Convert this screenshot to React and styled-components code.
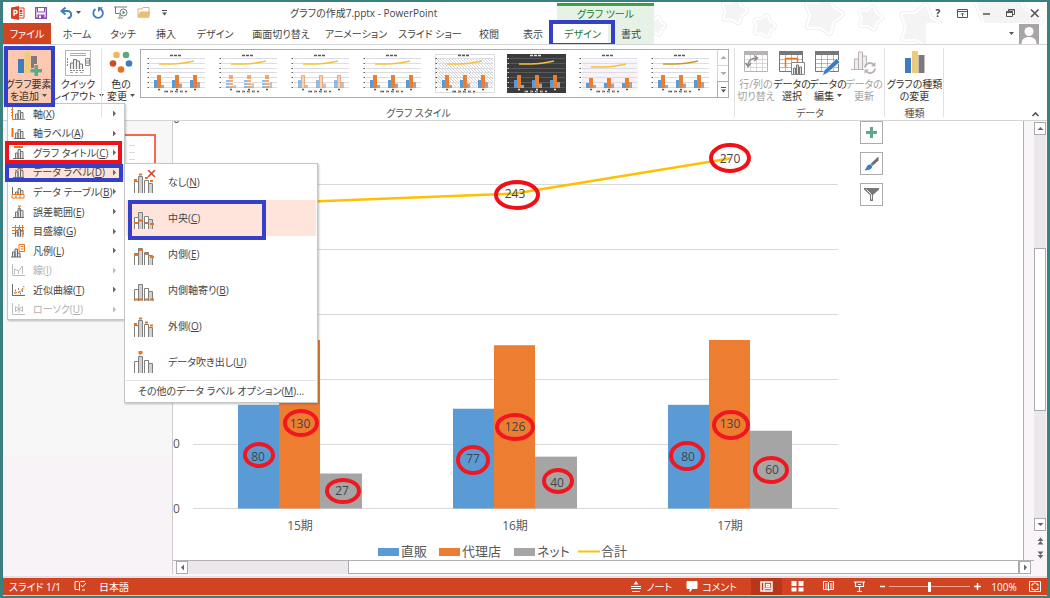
import { Fragment } from 'react';
import styled, { createGlobalStyle, css } from 'styled-components';

const GlobalStyle = createGlobalStyle`
    *{
        box-sizing: border-box;
    }
    body{
        margin: 0;
        background: #3c7f80;
        color: #444;
        font-family: 'Open Sans', 'Noto Sans CJK JP', sans-serif;
        font-feature-settings: 'palt';
        font-size: 10px;
        line-height: 12px;
    }
    button{
        background: none;
        border: 0;
        color: inherit;
        font: inherit;
        font-feature-settings: inherit;
        margin: 0;
        padding: 0;
        white-space: nowrap;
    }
    svg{
        display: block;
        flex: none;
    }
`

/* ---------- window frame ---------- */

const Frame = styled.div`
    border: 3px solid #3c7f80;
    border-bottom-width: 2px;
    border-top-width: 2px;
    display: flex;
    flex-direction: column;
    min-height: 100vh;
`

const Header = styled.header`
    background: #fff;
    display: flex;
    height: 42px;
    position: relative;
`

const HeaderMain = styled.div`
    display: flex;
    flex-direction: column;
    width: 554px;
`

const TitleRow = styled.div`
    align-items: center;
    display: flex;
    height: 21px;
`

const QuickAccess = styled.div`
    align-items: center;
    display: flex;
    gap: 7px;
    padding-left: 8px;
    width: 287px;
`

const IconButton = styled.button`
    align-items: center;
    display: flex;
    gap: 3px;
    justify-content: center;
    min-width: ${({ $width }) => $width || 14}px;
`

const Title = styled.h1`
    font-size: 10px;
    font-weight: 400;
    margin: 0;
    white-space: nowrap;
`

const TabRow = styled.nav`
    display: flex;
    height: 21px;
`

const Tab = styled.button`
    color: ${({ $active }) => ($active ? '#1b7a2b' : '#444')};
    background: ${({ $active }) => ($active ? '#fff' : 'none')};
    position: relative;
    width: ${({ $width }) => $width}px;
    ${({ $file }) => $file && css`
        background: #d24322;
        color: #fff;
    `}
`

const ContextTabs = styled.div`
    background: #e6f2e6;
    border-top: 3px solid #3f9f46;
    display: flex;
    flex-direction: column;
    margin-top: 1px;
    position: relative;
    width: 97px;
    z-index: 1;
`

const ContextTitle = styled.div`
    color: #1b7a2b;
    height: 17px;
    line-height: 17px;
    text-align: center;
`

const HeaderSide = styled.div`
    display: flex;
    flex: 1;
    flex-direction: column;
    overflow: hidden;
    position: relative;
`

const StarBackdrop = styled.svg`
    height: 42px;
    position: absolute;
    right: 0;
    top: 0;
    width: 393px;
`

const WindowButtons = styled.div`
    align-items: center;
    display: flex;
    gap: 10px;
    height: 21px;
    justify-content: flex-end;
    padding-right: 6px;
    position: relative;
`

const AccountRow = styled.div`
    align-items: center;
    align-self: flex-end;
    background: #fff;
    display: flex;
    gap: 5px;
    height: 21px;
    justify-content: flex-end;
    margin-right: 8px;
    position: relative;
    width: 113px;
`

/* hand-drawn frame laid over the control that is being explained */
const Callout = styled.span`
    border: 4px solid ${({ $color }) => $color || '#3440c8'};
    inset: ${({ $inset }) => $inset};
    pointer-events: none;
    position: absolute;
    z-index: 2;
`

/* ---------- ribbon ---------- */

const Ribbon = styled.section`
    background: #fff;
    border-bottom: 1px solid #d5d5d5;
    border-top: 1px solid #d5d5d5;
    display: flex;
    height: 77px;
    padding-top: 2px;
    position: relative;
    z-index: 3;
`

const Group = styled.div`
    display: flex;
    flex-direction: column;
    padding: 0 ${({ $pad }) => $pad || 0}px;
    position: relative;
    &::after{
        background: #e1e1e1;
        bottom: 3px;
        content: '';
        position: absolute;
        right: 0;
        top: 1px;
        width: 1px;
    }
`

const GroupBody = styled.div`
    display: flex;
    height: 60px;
`

const GroupLabel = styled.div`
    color: #555;
    text-align: center;
`

const Anchor = styled.div`
    display: flex;
    position: relative;
`

const RibbonButton = styled.button`
    align-items: center;
    background: ${({ $active }) => ($active ? '#fcc9b0' : 'none')};
    color: ${({ disabled }) => (disabled ? '#a0a0a0' : '#333')};
    display: flex;
    flex-direction: column;
    height: 58px;
    padding-top: 3px;
    width: ${({ $width }) => $width}px;
    svg{
        margin-bottom: 2px;
    }
`

const ButtonLine = styled.span`
    align-items: center;
    display: flex;
    gap: 3px;
`

const Gallery = styled.div`
    border: 1px solid #ababab;
    display: flex;
    height: 49px;
    margin-right: 6px;
    margin-top: 2px;
`

const GalleryItem = styled.button`
    display: flex;
    justify-content: center;
    padding-top: 4px;
    width: 72px;
`

const GalleryScroll = styled.div`
    border-left: 1px solid #d5d5d5;
    display: flex;
    flex-direction: column;
    width: 11px;
    button{
        align-items: center;
        border-bottom: 1px solid #d5d5d5;
        display: flex;
        flex: 1;
        justify-content: center;
    }
    button:last-child{
        border: 1px solid #ababab;
        margin: -1px;
    }
`

const CollapseButton = styled.button`
    align-self: flex-end;
    margin: 0 7px 3px auto;
`

/* ---------- menus ---------- */

const Menu = styled.div`
    background: #fff;
    border: 1px solid #c6c6c6;
    box-shadow: 1px 1px 2px rgba(0, 0, 0, 0.25);
    display: flex;
    flex-direction: column;
    height: 217px;
    left: 4px;
    position: absolute;
    top: 56px;
    width: 118px;
`

const MenuItem = styled.button`
    align-items: center;
    background: ${({ $active }) => ($active ? '#fde4d9' : 'none')};
    color: ${({ disabled }) => (disabled ? '#b0b0b0' : '#444')};
    display: flex;
    flex: 1;
    gap: 8px;
    padding: 0 6px 0 3px;
    width: 100%;
`

const MenuLabel = styled.span`
    flex: 1;
    min-width: 0;
    text-align: left;
`

const MenuRow = styled.div`
    display: flex;
    flex: 1;
    position: relative;
`

const SubMenu = styled.div`
    background: #fff;
    border: 1px solid #c6c6c6;
    box-shadow: 1px 1px 2px rgba(0, 0, 0, 0.25);
    left: 116px;
    padding: 0 1px;
    position: absolute;
    top: 0;
    width: 194px;
    z-index: 3;
`

const SubMenuRow = styled.div`
    position: relative;
`

const SubMenuItem = styled.button`
    align-items: center;
    background: ${({ $active }) => ($active ? '#fee4db' : 'none')};
    color: #444;
    display: flex;
    gap: 11px;
    height: 36px;
    padding-left: 7px;
    width: 100%;
`

const SubMenuFooter = styled.button`
    border-top: 1px solid #e1e1e1;
    color: #444;
    height: 22px;
    text-align: center;
    width: 100%;
`

/* ---------- workspace ---------- */

const Workspace = styled.main`
    background: #f9f5f9;
    display: flex;
    flex: 1;
    min-height: 0;
`

const SlidePane = styled.aside`
    background: linear-gradient(#f7f7f7 74%, #f8f3f7 74%);
    border-right: 1px solid #cfcbcf;
    padding: 13px 16px;
    width: 170px;
`

const SlideThumb = styled.div`
    background: #fff;
    border: 2px solid #f26c4f;
    display: flex;
    flex-direction: column;
    gap: 6px;
    height: 96px;
    padding: 9px 0 0 108px;
    i{
        background: #d9d9d9;
        height: 1px;
        width: 6px;
    }
`

const Editor = styled.div`
    display: flex;
    flex: 1;
    flex-direction: column;
    min-width: 0;
`

const CanvasRow = styled.div`
    display: flex;
    flex: 1;
    min-height: 0;
`

const Canvas = styled.div`
    background: #fff;
    border-right: 1px solid #b5b0b5;
    flex: 1;
    min-width: 0;
    position: relative;
`

const Plot = styled.svg`
    height: auto;
    width: 100%;
    text{
        fill: #444;
        font-size: 12px;
    }
    .axis{
        fill: #595959;
    }
    .legend{
        fill: #595959;
        font-size: 13px;
    }
`

const CanvasGutter = styled.div`
    width: 10px;
`

const ChartTools = styled.div`
    display: flex;
    flex-direction: column;
    gap: 8px;
    position: absolute;
    right: 140px;
    top: 0;
`

const ToolButton = styled.button`
    align-items: center;
    background: #fff;
    border: 1px solid #ababab;
    display: flex;
    height: 23px;
    justify-content: center;
    width: 23px;
`

const ScrollButton = styled.button`
    align-items: center;
    background: #fff;
    border: 1px solid #ababab;
    display: flex;
    flex: none;
    height: 13px;
    justify-content: center;
    width: 12px;
`

const VScroll = styled.div`
    align-items: center;
    display: flex;
    flex-direction: column;
    padding: 1px 1px 15px 0;
    width: 13px;
`

const HScroll = styled.div`
    background: #f9f5f9;
    border-top: 1px solid #b5b0b5;
    display: flex;
    height: 14px;
    padding: 0 3px;
`

const Track = styled.div`
    background: #ebe7eb;
    flex: ${({ $grow }) => $grow};
`

const VTrack = styled(Track)`
    width: 12px;
`

const VThumb = styled.div`
    background: #fff;
    border: 1px solid #ababab;
    flex: 162;
    width: 12px;
`

const HThumb = styled.div`
    background: #fff;
    border: 1px solid #ababab;
    border-top: 0;
    flex: 671;
`

const SlideStep = styled.button`
    margin-top: 6px;
`

/* ---------- status bar ---------- */

const StatusArea = styled.div`
    background: #f9f5f9;
    padding-top: 4px;
`

const StatusBar = styled.footer`
    align-items: stretch;
    background: #d24322;
    border-bottom: 1px solid #e8d0cc;
    box-shadow: 0 -2px 0 #e6e0e4;
    color: #fff;
    display: flex;
    height: 18px;
`

const StatusGroup = styled.div`
    align-items: center;
    display: flex;
    gap: ${({ $gap }) => $gap || 0}px;
    padding-left: ${({ $pad }) => $pad || 0}px;
`

const StatusSpacer = styled.div`
    flex: 1;
`

const StatusButton = styled.button`
    align-items: center;
    align-self: stretch;
    background: ${({ $active }) => ($active ? '#b93618' : 'none')};
    display: flex;
    gap: 3px;
    justify-content: center;
    min-width: ${({ $width }) => $width || 14}px;
`

const ZoomSlider = styled.input`
    appearance: none;
    background: transparent;
    height: 12px;
    margin: 0;
    width: 81px;
    &::-webkit-slider-runnable-track{
        background: linear-gradient(#f0a593, #f0a593) center / 100% 1px no-repeat;
        height: 10px;
    }
    &::-webkit-slider-thumb{
        appearance: none;
        background: #fff;
        height: 10px;
        width: 3px;
    }
`

/* ---------- icons ---------- */

const O = '#e8741c';
const G = '#6b6b6b';
const BLUE = '#3f7cbf';

const Caret = ({ color = '#555' }) => (
    <svg width="5" height="3" viewBox="0 0 5 3"><path d="M0 0h5L2.5 3z" fill={color} /></svg>
);

const Arrow = ({ dir, color = '#666' }) => {
    const d = {
        up: 'M0.5 5L3.5 2L6.5 5z',
        down: 'M0.5 2L3.5 5L6.5 2z',
        left: 'M5 0.5L2 3.5L5 6.5z',
        right: 'M2 0.5L5 3.5L2 6.5z',
    }[dir];
    return <svg width="7" height="7" viewBox="0 0 7 7"><path d={d} fill={color} /></svg>;
};

const AppIcon = () => (
    <svg width="14" height="14" viewBox="0 0 14 14">
        <path d="M7 2h6v10H7z" fill="#fff" stroke="#d24322" />
        <path d="M8.5 7.5h3M8.5 9.5h3" stroke="#d24322" />
        <circle cx="10" cy="5" r="1.5" fill="#d24322" />
        <path d="M0 1.5L8 0v14L0 12.5z" fill="#d24322" />
        <path d="M3 10V4.500h1.5a1.6 1.6 0 0 1 0 3.200H3" fill="none" stroke="#fff" strokeWidth="1.3" />
    </svg>
);

const SaveIcon = () => (
    <svg width="12" height="12" viewBox="0 0 12 12">
        <path d="M0.7 0.700h10.600v10.600H0.700z" fill="#fff" stroke="#8b4fae" strokeWidth="1.4" />
        <path d="M2.5 1v4h7V1" fill="#fff" stroke="#8b4fae" />
        <path d="M2.5 11V7.500h7V11z" fill="#8b4fae" />
        <path d="M4 8.500h2V11H4z" fill="#fff" />
    </svg>
);

const UndoIcon = () => (
    <svg width="13" height="12" viewBox="0 0 13 12">
        <path d="M5.5 0.5L1.5 4l4 3.5M1.5 4h6a3.6 3.6 0 0 1 0 7.300" fill="none" stroke={BLUE} strokeWidth="2" />
    </svg>
);

const RedoIcon = () => (
    <svg width="12" height="12" viewBox="0 0 12 12">
        <path d="M3.5 2A4.800 4.800 0 1 0 9 2.200" fill="none" stroke={BLUE} strokeWidth="1.8" />
        <path d="M6 0v5L11 0.500z" fill={BLUE} />
    </svg>
);

const ShowIcon = () => (
    <svg width="14" height="13" viewBox="0 0 14 13">
        <path d="M0 1h13M1.5 1v6.500h4M6 8v3M4 12h5" fill="none" stroke="#777" />
        <circle cx="9.5" cy="6.5" r="3.5" fill="#fff" stroke="#777" />
        <path d="M8.5 4.500v4l3-2z" fill="#4d9a78" />
    </svg>
);

const FolderIcon = () => (
    <svg width="14" height="11" viewBox="0 0 14 11">
        <path d="M1 10V2h4l1-1.500h6V10z" fill="#fff" stroke="#e0b060" />
        <path d="M0.5 10.500L3 4.500h10.500L11.500 10.500z" fill="#e9bd73" />
    </svg>
);

const CustomizeIcon = () => (
    <svg width="5" height="6" viewBox="0 0 5 6"><path d="M0 0.500h5" stroke="#555" /><path d="M0 2.500h5L2.500 5.500z" fill="#555" /></svg>
);

const AddElementIcon = () => (
    <svg width="26" height="26" viewBox="0 0 26 26">
        <path d="M2 9h6v14H2z" fill={BLUE} />
        <path d="M8.5 2h6v21h-6z" fill="#efca7a" />
        <path d="M15 6h6v17h-6z" fill="#7e7a7c" />
        <path d="M14 18h4v-4h6v4h2v6h-2v2h-6v-2h-4z" fill="#fcc9b0" />
        <path d="M18.5 15h3.500v4h4v3.500h-4v3.500h-3.500v-3.500h-4V19h4z" fill="#5fa98b" />
    </svg>
);

const LayoutIcon = () => (
    <svg width="26" height="26" viewBox="0 0 26 26">
        <path d="M0.5 0.500h25v25h-25z" fill="#fff" stroke="#b5b5b5" />
        <path d="M5 3.500h16M5 5.500h16M5 22.500h3M10 22.500h3M15 22.500h3" stroke="#aaa" />
        <path d="M2.5 8v9M5 20.500h14" stroke="#888" strokeDasharray="2 1" />
        <path d="M5.5 19v-6h3v6M8.500 19V9.500h3V19M11.500 19v-8h3v8M14.500 19v-5h3v5" fill="#ececec" stroke="#777" />
        <path d="M20.5 8.500h4v7h-4z" fill="#fff" stroke="#888" />
        <path d="M21 11h3M21 13h3" stroke="#888" />
    </svg>
);

const ColorsIcon = () => (
    <svg width="24" height="26" viewBox="0 0 24 26">
        <circle cx="7.5" cy="5" r="3.3" fill="#eeb65c" />
        <circle cx="17" cy="5" r="3.3" fill="#5fa58a" />
        <circle cx="4" cy="13.5" r="3.3" fill="#cf4a2a" />
        <circle cx="20" cy="13.5" r="3.3" fill={BLUE} />
        <circle cx="12" cy="19.5" r="3.3" fill="#e8711a" />
    </svg>
);

const SheetBase = ({ color }) => (
    <>
        <path d="M0.5 2.500h23v19h-23z" fill="#fff" stroke={color} />
        <path d="M0 1h24v4H0z" fill={color} />
        <path d="M0.5 9.500h23M0.500 13.500h23M0.500 17.500h23M6.500 5v16M12.500 5v16M18.500 5v16" stroke={color} strokeOpacity="0.5" />
    </>
);

const SwitchIcon = () => (
    <svg width="24" height="26" viewBox="0 0 24 26">
        <SheetBase color="#b9b3b7" />
        <path d="M4 16c0-5 3-8 9-8M10 5.500l3.500 2.500-3.500 3M1.500 13L4 16.500 7 13" fill="none" stroke="#8d878b" strokeWidth="1.4" />
    </svg>
);

const SelectIcon = () => (
    <svg width="26" height="26" viewBox="0 0 26 26">
        <SheetBase color="#777" />
        <path d="M6.5 17V8.500h12v4" fill="none" stroke={O} strokeWidth="1.5" />
        <path d="M12.5 12.500h13v12h-13z" fill="#fff" stroke="#888" />
        <path d="M14.5 24v-6h2v6M17.500 24v-9h2v9M20.500 24v-7h2v7" fill="#ddd" stroke="#777" />
    </svg>
);

const EditIcon = () => (
    <svg width="26" height="26" viewBox="0 0 26 26">
        <SheetBase color="#777" />
        <path d="M21.5 8.500L25 12 12 23.500 7.500 25.500 9 20.500z" fill={BLUE} stroke="#fff" strokeWidth="0.7" />
    </svg>
);

const RefreshIcon = () => (
    <svg width="26" height="26" viewBox="0 0 26 26">
        <path d="M0 19.500h15M3.500 19V9h4v10M7.500 19V2h4v17M11.500 19V6h4v13" fill="#f0edf0" stroke="#b9b3b7" />
        <circle cx="19" cy="18" r="6.5" fill="#fff" />
        <path d="M14 17.500a5 5 0 0 1 9-2.500M24 18.500a5 5 0 0 1-9 2.500" fill="none" stroke="#b9b3b7" strokeWidth="2" />
        <path d="M24.5 12v4.500H20zM13.500 24v-4.500H18z" fill="#b9b3b7" />
    </svg>
);

const ChangeTypeIcon = () => (
    <svg width="20" height="26" viewBox="0 0 20 26">
        <path d="M0 8h6v15H0z" fill={BLUE} />
        <path d="M7 1h6v22H7z" fill="#efca7a" />
        <path d="M13.5 5h6v18h-6z" fill="#7e7a7c" />
    </svg>
);

const WINDOW_ICONS = {
    ribbon: <path d="M0.5 2.500h10v8h-10zM0 4.500h11M5.500 9.500v-3M4 7.500l1.500-1.500L7 7.500" />,
    min: <path d="M2 7h7" strokeWidth="1.5" />,
    restore: <path d="M3.5 4V2.500h6v5H8M1.500 4.500h6v5h-6zM1.500 5.500h6M3.500 3h6" />,
    close: <path d="M2 2.500l7.500 7.500M9.500 2.500L2 10" strokeWidth="1.6" />,
};

const WinIcon = ({ name }) => (
    <svg width="11" height="12" viewBox="0 0 11 12" fill="none" stroke="#555">{WINDOW_ICONS[name]}</svg>
);

const Avatar = () => (
    <svg width="20" height="20" viewBox="0 0 20 20">
        <path d="M0 0h20v20H0z" fill="#a9a5a7" />
        <circle cx="10" cy="7.5" r="4.5" fill="#fff" />
        <path d="M2.5 20c0-5 3-7 7.500-7s7.500 2 7.500 7z" fill="#fff" />
    </svg>
);

/* gallery previews: one mini combo chart per style */
const ChartPreview = ({ variant }) => {
    const dark = variant === 'dark';
    const grid = dark ? '#5a5a5a' : '#dcdce2';
    const ink = dark ? '#e5e5e5' : '#555';
    const soft = variant === 'stripe' || variant === 'soft';
    const shift = variant === 'tinted' ? 3 : 0;
    return (
        <svg width="60" height="40" viewBox="0 0 60 40">
            {dark && <path d="M0 0h59v39H0z" fill="#3b3b3b" />}
            {variant === 'tinted' && <path d="M3 6h56v30H3z" fill="#f8f3f8" />}
            {variant === 'hatch' && (
                <>
                    <defs>
                        <pattern id="hatch" width="3" height="3" patternUnits="userSpaceOnUse">
                            <path d="M0 0l3 3" stroke="#c4c4c4" strokeWidth="0.7" />
                        </pattern>
                    </defs>
                    <path d="M0.5 0.500h59v38h-59z" fill="#fff" stroke="#ddd" />
                    <path d="M2 4h56v30H2z" fill="url(#hatch)" />
                </>
            )}
            <path d="M23 1.500h11" stroke={ink} strokeWidth="1.3" strokeDasharray="3 1" />
            {[5, 10, 15, 19, 24, 29, 34].map((y) => (
                <g key={y}>
                    <path d={`M3 ${y - 0.5}h55`} stroke={grid} />
                    <path d={`M0.5 ${y - 0.5}h1.5`} stroke={ink} />
                </g>
            ))}
            <path d={`M12 ${10 + shift}h12q10 0 23-3`} fill="none" stroke={variant === 'gold' ? '#c99a1c' : '#f5c237'} strokeWidth="1.5" />
            {[7, 25, 43].map((x) => (
                <g key={x} opacity={soft ? 0.65 : 1}>
                    <path d={`M${x} ${26 + shift}h4v${8 - shift}h-4z`} fill="#5b9bd5" />
                    <path d={`M${x + 3} ${21 + shift}h4v${13 - shift}h-4z`} fill="#ed7d31" />
                    <path d={`M${x + 7} ${31 - (x - 7) / 12}h3v${3 + (x - 7) / 12}h-3z`} fill="#a5a5a5" />
                    {variant === 'stripe' && <path d={`M${x} 25.5h8M${x} 28.5h8M${x} 31.5h8`} stroke="#fff" />}
                    {variant === 'soft' && <path d={`M${x + 5} 22v12`} stroke="#fff" />}
                </g>
            ))}
            {[12, 30, 48].map((x) => <path key={x} d={`M${x - 1} 35.5h2`} stroke={ink} strokeWidth="1.5" />)}
            <path d="M18 37.500h22" stroke={ink} strokeDasharray="3 2" strokeWidth="1.3" />
            <path d="M17 37.500h2M29 37.500h2" stroke="#5b9bd5" strokeWidth="1.3" />
            <path d="M23 37.500h2M34 37.500h2" stroke="#ed7d31" strokeWidth="1.3" />
        </svg>
    );
};

const miniBars = <path d="M4.5 12.500V7H7V12.500M7 12.500V3.500h2.500V12.500M9.500 12.500V5.500H12V12.500" fill="#e4e4e4" stroke={G} strokeWidth="0.9" />;

const ELEMENT_ICONS = {
    axis: <>{miniBars}<path d="M1.5 0v12.500H14M0 2.500h2M0 5.500h2M0 8.500h2" fill="none" stroke={O} /></>,
    axisTitle: <>{miniBars}<path d="M1.5 2v9" stroke={O} strokeWidth="2" /><path d="M3 12.500h11" stroke={G} /></>,
    title: <>{miniBars}<path d="M3 1h9" stroke={O} strokeWidth="2" /><path d="M2 12.500h11" stroke={G} /></>,
    labels: <>{miniBars}<path d="M4 5.500h2M7 1.500h2M10 3.500h2" stroke={O} strokeWidth="1.5" /><path d="M2 12.500h11" stroke={G} /></>,
    table: <>{miniBars}<path d="M1.5 2v8" stroke={G} /><path d="M1 9.500h12v3.500H1zM5 9.500v3.500M9 9.500v3.500" fill="#fff" stroke={O} /></>,
    error: <>{miniBars}<path d="M8.3 1v5M7 1h3" stroke={O} /><path d="M2 12.500h11" stroke={G} /></>,
    grid: <><path d="M1 3.500h12M1 6.500h12M1 9.500h12M4.500 1v12M8.500 1v12M11.500 1v12" stroke={O} /><path d="M4.5 12.500V8H7v4.500M7 12.500V5h2.500v7.500M9.500 12.500V7H12v5.500" fill="#e4e4e4" stroke={G} /></>,
    legend: <><path d="M1.5 13V8H4v5M4 13V5h2.500v8M6.500 13V9H9v4M0 13h10" fill="#e4e4e4" stroke={G} /><path d="M8 0.500h5.500v7H8zM9.500 2.500h3M9.500 5h3" fill="#fff" stroke={O} /></>,
    lines: <path d="M1.5 1v11.500H14M3.500 11V6l4 2 4-5v8M7.500 8v3" fill="none" stroke="#bdbdbd" />,
    trend: <><path d="M1.5 1v11.500H14" fill="none" stroke={G} /><path d="M3 10c5 0 8-2 10-7" fill="none" stroke={O} strokeWidth="1.3" strokeDasharray="3 1" /><path d="M4 7.500h1M7 6h1M9 10.500h1M11 8h1" stroke={G} strokeWidth="1.4" /></>,
    updown: <path d="M1.5 1v11.500H14M4.500 4.500l7 5v-5l-7 5zM8 2v9" fill="none" stroke="#bdbdbd" />,
};

const ElementIcon = ({ name }) => (
    <svg width="14" height="14" viewBox="0 0 14 14">{ELEMENT_ICONS[name]}</svg>
);

/* where the orange marks sit on the four bars of each data label icon */
const LABEL_MARKS = {
    none: 'M1 7h3M6 1.500h3M12 5h3M17 8h3',
    center: 'M1 14h4M6 11.500h4M12 14h3M17 15h4',
    inside: 'M1 10h4M6 5h4M12 9h3M17 12h4',
    base: 'M1 18.500h4M6 18.500h4M12 18.500h3M17 18.500h4',
    outside: 'M1 7h3M6 1.500h3M12 5.500h3M17 8.500h3',
    callout: '',
};

const LabelIcon = ({ name }) => (
    <svg width="24" height="24" viewBox="0 0 24 24">
        <g transform="translate(0 3)">
            <path d="M1.5 20V8.500h4V20M11.500 20V7.500h4V20" fill="#fff" stroke="#808080" />
            <path d="M5.5 20V3.500h4V20M15.500 20v-9.500h4V20" fill="#d2d0d2" stroke="#808080" />
            <path d={LABEL_MARKS[name]} stroke={O} strokeWidth="1.8" />
            {name === 'callout' && <path d="M5.5-2h4V1h-1.500L6.500 3V1h-1z" fill={O} />}
        </g>
        {name === 'none' && <path d="M15 0l7 7M22 0l-7 7" stroke="#d9472b" strokeWidth="1.6" />}
    </svg>
);

const STATUS_ICONS = {
    spell: <path d="M5.5 2.500v8M1 1.500h3.500l1 1 1-1H11M1 1.500v8h3.500l1 1M8 10h3M7 5l1.500 2L12 3" />,
    notes: <><path d="M0 6.500h10M0 8.500h10M1 11.500h8" /><path d="M2.5 4.500L5 1l2.500 3.500z" fill="#fff" stroke="none" /></>,
    comment: <path d="M1 1.500h10v7H6l-2 3v-3H1z" fill="#fff" />,
    normal: <path d="M1 2h11v9H1zM4 2v9M5 8.500h6M6.500 4.500h3v2h-3z" strokeWidth="1.5" />,
    sorter: <path d="M0.5 1h5v5h-5zM7.500 1h5v5h-5zM0.500 7.500h5v4h-5zM7.500 7.500h5v4h-5z" fill="#fff" stroke="none" />,
    reading: <path d="M1.5 1.500h4l1 1 1-1h4v8h-4l-1 1-1-1h-4zM6.500 2.500v8M3 4h2.500M3 6h2.500M3 8h2.500M8 4h2.500M8 6h2.500M8 8h2.500" />,
    slideshow: <path d="M1 2h11M2.500 2.500v4h8v-4M6.500 7v4.500M4 11.500h5M5 4.500h3" strokeWidth="1.2" />,
    fit: <path d="M0.5 1.500h11v10h-11zM3 6V4h2M9 6V4H7M3 7v2.500h2M9 7v2.500H7M6 2v2M6 9v2" />,
};

const StatusIcon = ({ name }) => (
    <svg width="13" height="13" viewBox="0 0 13 13" fill="none" stroke="#fff">{STATUS_ICONS[name]}</svg>
);

/* ---------- data ---------- */

const tabs = [
    { name: 'ファイル', width: 48, file: true },
    { name: 'ホーム', width: 52 },
    { name: 'タッチ', width: 40 },
    { name: '挿入', width: 46 },
    { name: 'デザイン', width: 52 },
    { name: '画面切り替え', width: 80 },
    { name: 'アニメーション', width: 70 },
    { name: 'スライド ショー', width: 78 },
    { name: '校閲', width: 40 },
    { name: '表示', width: 48 },
];

const styles = ['plain', 'stripe', 'soft', 'plain', 'hatch', 'dark', 'tinted', 'gold'];

const elementMenu = [
    { icon: 'axis', label: '軸', hotkey: 'X' },
    { icon: 'axisTitle', label: '軸ラベル', hotkey: 'A' },
    { icon: 'title', label: 'グラフ タイトル', hotkey: 'C', mark: 'red' },
    { icon: 'labels', label: 'データ ラベル', hotkey: 'D', mark: 'blue' },
    { icon: 'table', label: 'データ テーブル', hotkey: 'B' },
    { icon: 'error', label: '誤差範囲', hotkey: 'E' },
    { icon: 'grid', label: '目盛線', hotkey: 'G' },
    { icon: 'legend', label: '凡例', hotkey: 'L' },
    { icon: 'lines', label: '線', hotkey: 'I', disabled: true },
    { icon: 'trend', label: '近似曲線', hotkey: 'T' },
    { icon: 'updown', label: 'ローソク', hotkey: 'U', disabled: true },
];

const labelMenu = [
    { icon: 'none', label: 'なし', hotkey: 'N' },
    { icon: 'center', label: '中央', hotkey: 'C', active: true },
    { icon: 'inside', label: '内側', hotkey: 'E' },
    { icon: 'base', label: '内側軸寄り', hotkey: 'B' },
    { icon: 'outside', label: '外側', hotkey: 'O' },
    { icon: 'callout', label: 'データ吹き出し', hotkey: 'U' },
];

const periods = [
    {
        name: '15期', x: 238,
        bars: [
            { value: 80, ring: [259, 455, 14, 11] },
            { value: 130, ring: [301, 423, 16, 12] },
            { value: 27, ring: [343, 491, 16, 11] },
        ],
    },
    {
        name: '16期', x: 453,
        bars: [
            { value: 77, ring: [473, 460, 15, 13] },
            { value: 126, ring: [515, 427, 18, 12] },
            { value: 40, ring: [558, 481, 14, 11] },
        ],
    },
    {
        name: '17期', x: 668,
        bars: [
            { value: 80, ring: [687, 456, 16, 13] },
            { value: 130, ring: [731, 425, 17, 13] },
            { value: 60, ring: [771, 470, 16, 12] },
        ],
    },
];

const totals = [
    { value: 243, x: 515, y: 194, ring: [517, 195, 21, 13] },
    { value: 270, x: 730, y: 159, ring: [730, 158, 19, 13] },
];

const seriesColors = ['#5b9bd5', '#ed7d31', '#a5a5a5'];

const legend = [
    { name: '直販', x: 378, color: '#5b9bd5' },
    { name: '代理店', x: 439, color: '#ed7d31' },
    { name: 'ネット', x: 514, color: '#a5a5a5' },
    { name: '合計', x: 578, color: '#ffc000', line: true },
];

/* ---------- parts ---------- */

const Hotkey = ({ label, hotkey }) => <>{label}(<u>{hotkey}</u>)</>;

function TwoLineButton({ icon, lines, width, caret, active, disabled }){
    return(
        <RibbonButton type="button" $width={width} $active={active} disabled={disabled}>
            {icon}
            <ButtonLine>{lines[0]}</ButtonLine>
            <ButtonLine>{lines[1]}{caret && <Caret />}</ButtonLine>
        </RibbonButton>
    )
}

function LabelSubMenu(){
    return(
        <SubMenu>
            {labelMenu.map((item) => (
                <SubMenuRow key={item.icon}>
                    <SubMenuItem type="button" $active={item.active}>
                        <LabelIcon name={item.icon} />
                        <span><Hotkey {...item} /></span>
                    </SubMenuItem>
                    {item.active && <Callout $inset="0 50px -4px 2px" />}
                </SubMenuRow>
            ))}
            <SubMenuFooter type="button">その他のデータ ラベル オプション(<u>M</u>)...</SubMenuFooter>
        </SubMenu>
    )
}

function ElementMenu(){
    return(
        <Menu>
            {elementMenu.map((item) => (
                <MenuRow key={item.icon}>
                    <MenuItem type="button" disabled={item.disabled} $active={item.mark === 'blue'}>
                        <ElementIcon name={item.icon} />
                        <MenuLabel><Hotkey {...item} /></MenuLabel>
                        <Arrow dir="right" color={item.disabled ? '#bbb' : '#666'} />
                    </MenuItem>
                    {item.mark === 'red' && <Callout $color="#f01018" $inset="-2px 2px -1px -3px" />}
                    {item.mark === 'blue' && <Callout $inset="1px 1px 0 -3px" />}
                    {item.mark === 'blue' && <LabelSubMenu />}
                </MenuRow>
            ))}
        </Menu>
    )
}

function Star({ x, y, r }){
    const points = Array.from({ length: 10 }, (_, i) => {
        const a = (Math.PI / 5) * i - 1.3;
        const len = i % 2 ? r * 0.6 : r;
        return `${x + len * Math.cos(a)},${y + len * Math.sin(a)}`;
    }).join(' ');
    return(
        <g strokeLinejoin="round">
            <polygon points={points} fill="#f0f0f0" stroke="#f0f0f0" strokeWidth="8" />
            <polygon points={points} fill="#fff" stroke="#fff" strokeWidth="6" />
            <polygon points={points} fill="#f4f4f4" stroke="#f4f4f4" strokeWidth="2" />
        </g>
    )
}

function AppHeader(){
    return(
        <Header>
            <HeaderMain>
                <TitleRow>
                    <QuickAccess>
                        <AppIcon />
                        <IconButton type="button" aria-label="上書き保存" $width={18}><SaveIcon /></IconButton>
                        <IconButton type="button" aria-label="元に戻す" $width={26}><UndoIcon /><Caret /></IconButton>
                        <IconButton type="button" aria-label="やり直し" $width={16}><RedoIcon /></IconButton>
                        <IconButton type="button" aria-label="最初から" $width={16}><ShowIcon /></IconButton>
                        <IconButton type="button" aria-label="開く" $width={16}><FolderIcon /></IconButton>
                        <IconButton type="button" aria-label="カスタマイズ" $width={10}><CustomizeIcon /></IconButton>
                    </QuickAccess>
                    <Title>グラフの作成7.pptx - PowerPoint</Title>
                </TitleRow>
                <TabRow>
                    {tabs.map((tab) => (
                        <Tab key={tab.name} type="button" $width={tab.width} $file={tab.file}>{tab.name}</Tab>
                    ))}
                </TabRow>
            </HeaderMain>
            <ContextTabs>
                <ContextTitle>グラフ ツール</ContextTitle>
                <TabRow>
                    <Tab type="button" $width={51} $active>
                        デザイン
                        <Callout $inset="-3px -7px -3px -8px" />
                    </Tab>
                    <Tab type="button" $width={46}>書式</Tab>
                </TabRow>
            </ContextTabs>
            <HeaderSide>
                <StarBackdrop viewBox="654 2 393 42">
                    <Star x={656} y={26} r={7} />
                    <Star x={734} y={11} r={11} />
                    <Star x={764} y={26} r={9} />
                    <Star x={823} y={15} r={18} />
                    <Star x={870} y={18} r={10} />
                    <Star x={920} y={26} r={20} />
                    <Star x={1006} y={22} r={34} />
                </StarBackdrop>
                <WindowButtons>
                    <IconButton type="button"><strong>?</strong></IconButton>
                    <IconButton type="button" aria-label="リボンの表示オプション"><WinIcon name="ribbon" /></IconButton>
                    <IconButton type="button" aria-label="最小化"><WinIcon name="min" /></IconButton>
                    <IconButton type="button" aria-label="元のサイズに戻す"><WinIcon name="restore" /></IconButton>
                    <IconButton type="button" aria-label="閉じる"><WinIcon name="close" /></IconButton>
                </WindowButtons>
                <AccountRow>
                    <Caret />
                    <Avatar />
                </AccountRow>
            </HeaderSide>
        </Header>
    )
}

function AppRibbon(){
    return(
        <Ribbon>
            <Group>
                <GroupBody>
                    <Anchor>
                        <TwoLineButton icon={<AddElementIcon />} lines={['グラフ要素', 'を追加']} width={51} caret active />
                        <Callout $inset="-1px -1px 0 1px" />
                        <ElementMenu />
                    </Anchor>
                    <TwoLineButton icon={<LayoutIcon />} lines={['クイック', 'レイアウト']} width={48} caret />
                </GroupBody>
            </Group>
            <Group>
                <GroupBody>
                    <TwoLineButton icon={<ColorsIcon />} lines={['色の', '変更']} width={38} caret />
                    <Gallery>
                        {styles.map((variant, i) => (
                            <GalleryItem key={i} type="button" aria-label={`スタイル ${i + 1}`}>
                                <ChartPreview variant={variant} />
                            </GalleryItem>
                        ))}
                        <GalleryScroll>
                            <button type="button" aria-label="前の行"><Arrow dir="up" color="#aaa" /></button>
                            <button type="button" aria-label="次の行"><Arrow dir="down" color="#aaa" /></button>
                            <button type="button" aria-label="その他"><CustomizeIcon /></button>
                        </GalleryScroll>
                    </Gallery>
                </GroupBody>
                <GroupLabel>グラフ スタイル</GroupLabel>
            </Group>
            <Group $pad={3}>
                <GroupBody>
                    <TwoLineButton icon={<SwitchIcon />} lines={['行/列の', '切り替え']} width={36} disabled />
                    <TwoLineButton icon={<SelectIcon />} lines={['データの', '選択']} width={36} />
                    <TwoLineButton icon={<EditIcon />} lines={['データの', '編集']} width={36} caret />
                    <TwoLineButton icon={<RefreshIcon />} lines={['データの', '更新']} width={36} disabled />
                </GroupBody>
                <GroupLabel>データ</GroupLabel>
            </Group>
            <Group $pad={2}>
                <GroupBody>
                    <TwoLineButton icon={<ChangeTypeIcon />} lines={['グラフの種類', 'の変更']} width={55} />
                </GroupBody>
                <GroupLabel>種類</GroupLabel>
            </Group>
            <CollapseButton type="button" aria-label="リボンを折りたたむ">
                <svg width="9" height="6" viewBox="0 0 9 6"><path d="M1.5 5l3-3 3 3" fill="none" stroke="#555" strokeWidth="1.6" /></svg>
            </CollapseButton>
        </Ribbon>
    )
}

function SalesChart(){
    const base = 508.5;
    const unit = 1.296;
    return(
        <Plot viewBox="173 121 850 438" preserveAspectRatio="xMinYMin meet">
            {[184, 249, 314, 379, 444, 508].map((y) => (
                <path key={y} d={`M193 ${y}.5h645`} stroke="#d9d9d9" />
            ))}
            <text className="axis" x="173" y="123">0</text>
            <text className="axis" x="173" y="448">0</text>
            <text className="axis" x="173" y="513">0</text>
            {periods.map((period) => (
                <g key={period.name}>
                    {period.bars.map((bar, i) => (
                        <rect
                            key={i}
                            x={period.x + i * 41}
                            y={base - bar.value * unit}
                            width={i === 2 ? 42 : 41}
                            height={bar.value * unit}
                            fill={seriesColors[i]}
                        />
                    ))}
                    <text className="axis" x={period.x + 62} y="530" textAnchor="middle">{period.name}</text>
                </g>
            ))}
            <polyline points="300,202 515,193.5 730,158.5" fill="none" stroke="#ffc000" strokeWidth="2.5" />
            {periods.map((period) => period.bars.map((bar, i) => (
                <Fragment key={`${period.name}${i}`}>
                    <text x={period.x + 20 + i * 42} y={base - (bar.value * unit) / 2 + 4} textAnchor="middle">{bar.value}</text>
                    <ellipse cx={bar.ring[0]} cy={bar.ring[1]} rx={bar.ring[2]} ry={bar.ring[3]} fill="none" stroke="#f01820" strokeWidth="4" />
                </Fragment>
            )))}
            {totals.map((t) => (
                <Fragment key={t.value}>
                    <text x={t.x} y={t.y + 4} textAnchor="middle">{t.value}</text>
                    <ellipse cx={t.ring[0]} cy={t.ring[1]} rx={t.ring[2]} ry={t.ring[3]} fill="none" stroke="#f01018" strokeWidth="4" />
                </Fragment>
            ))}
            {legend.map((item) => (
                <g key={item.name}>
                    {item.line
                        ? <path d={`M${item.x} 551.5h22`} stroke={item.color} strokeWidth="2" />
                        : <rect x={item.x} y="548" width="21" height="8" fill={item.color} />}
                    <text className="legend" x={item.x + 23} y="556">{item.name}</text>
                </g>
            ))}
        </Plot>
    )
}

function AppWorkspace(){
    return(
        <Workspace>
            <SlidePane>
                <SlideThumb><i /><i /><i /></SlideThumb>
            </SlidePane>
            <Editor>
                <CanvasRow>
                    <Canvas>
                        <SalesChart />
                        <ChartTools>
                            <ToolButton type="button" aria-label="グラフ要素">
                                <svg width="13" height="13" viewBox="0 0 13 13"><path d="M5 1h3v4h4v3H8v4H5V8H1V5h4z" fill="#5fa98b" /></svg>
                            </ToolButton>
                            <ToolButton type="button" aria-label="グラフ スタイル">
                                <svg width="15" height="15" viewBox="0 0 15 15">
                                    <path d="M14.5 0.500v4L9.500 9 7.500 7z" fill="#6f6b6d" />
                                    <path d="M7 7.500l2 2" stroke={BLUE} strokeWidth="1.5" />
                                    <path d="M0.5 14c2-1 2-5 5-5.500 2 0 3 1.500 2.500 3C7 14 3 14.500 0.500 14z" fill={BLUE} />
                                </svg>
                            </ToolButton>
                            <ToolButton type="button" aria-label="グラフ フィルター">
                                <svg width="15" height="15" viewBox="0 0 15 15">
                                    <path d="M0 1h15v1.500L9 8v6H6V8L0 2.500z" fill="#7a7678" />
                                    <path d="M2.5 2.500L7.500 7.500v5" fill="none" stroke="#fff" strokeWidth="0.9" />
                                </svg>
                            </ToolButton>
                        </ChartTools>
                    </Canvas>
                    <CanvasGutter />
                </CanvasRow>
                <HScroll>
                    <ScrollButton type="button" aria-label="左"><Arrow dir="left" /></ScrollButton>
                    <Track $grow={160} />
                    <HThumb />
                    <ScrollButton type="button" aria-label="右"><Arrow dir="right" /></ScrollButton>
                </HScroll>
            </Editor>
            <VScroll>
                <ScrollButton type="button" aria-label="上"><Arrow dir="up" /></ScrollButton>
                <VTrack $grow={114} />
                <VThumb />
                <VTrack $grow={108} />
                <ScrollButton type="button" aria-label="下"><Arrow dir="down" /></ScrollButton>
                <SlideStep type="button" aria-label="前のスライド">
                    <svg width="7" height="8" viewBox="0 0 7 8"><path d="M0.5 4L3.500 0.500 6.500 4zM0.500 7.500L3.500 4l3 3.500z" fill="#666" /></svg>
                </SlideStep>
                <SlideStep type="button" aria-label="次のスライド">
                    <svg width="7" height="8" viewBox="0 0 7 8"><path d="M0.5 0.500L3.500 4l3-3.500zM0.500 4l3 3.500 3-3.500z" fill="#666" /></svg>
                </SlideStep>
            </VScroll>
        </Workspace>
    )
}

function AppStatus(){
    return(
        <StatusArea>
            <StatusBar>
                <StatusGroup $gap={12} $pad={6}>
                    <span>スライド 1/1</span>
                    <StatusButton type="button" aria-label="スペル チェック"><StatusIcon name="spell" /></StatusButton>
                    <StatusButton type="button">日本語</StatusButton>
                </StatusGroup>
                <StatusSpacer />
                <StatusGroup $gap={14}>
                    <StatusButton type="button"><StatusIcon name="notes" />ノート</StatusButton>
                    <StatusButton type="button"><StatusIcon name="comment" />コメント</StatusButton>
                    <StatusGroup as={ViewSwitch}>
                        <StatusButton type="button" aria-label="標準" $width={31} $active><StatusIcon name="normal" /></StatusButton>
                        <StatusButton type="button" aria-label="スライド一覧" $width={31}><StatusIcon name="sorter" /></StatusButton>
                        <StatusButton type="button" aria-label="閲覧表示" $width={31}><StatusIcon name="reading" /></StatusButton>
                        <StatusButton type="button" aria-label="スライド ショー" $width={31}><StatusIcon name="slideshow" /></StatusButton>
                    </StatusGroup>
                </StatusGroup>
                <StatusGroup>
                    <StatusButton type="button" aria-label="縮小">
                        <svg width="7" height="7" viewBox="0 0 7 7"><path d="M1 3.500h5" stroke="#fff" strokeWidth="1.5" /></svg>
                    </StatusButton>
                    <ZoomSlider type="range" aria-label="ズーム" defaultValue={50} />
                    <StatusButton type="button" aria-label="拡大">
                        <svg width="7" height="7" viewBox="0 0 7 7"><path d="M0 3.500h7M3.500 0v7" stroke="#fff" strokeWidth="1.5" /></svg>
                    </StatusButton>
                    <StatusButton type="button" $width={40}>100%</StatusButton>
                    <StatusButton type="button" aria-label="ウィンドウに合わせる" $width={23}><StatusIcon name="fit" /></StatusButton>
                </StatusGroup>
            </StatusBar>
        </StatusArea>
    )
}

const ViewSwitch = styled.div`
    align-self: stretch;
    display: flex;
`

export default function App(){
    return(
        <Frame>
            <GlobalStyle />
            <AppHeader />
            <AppRibbon />
            <AppWorkspace />
            <AppStatus />
        </Frame>
    )
}
